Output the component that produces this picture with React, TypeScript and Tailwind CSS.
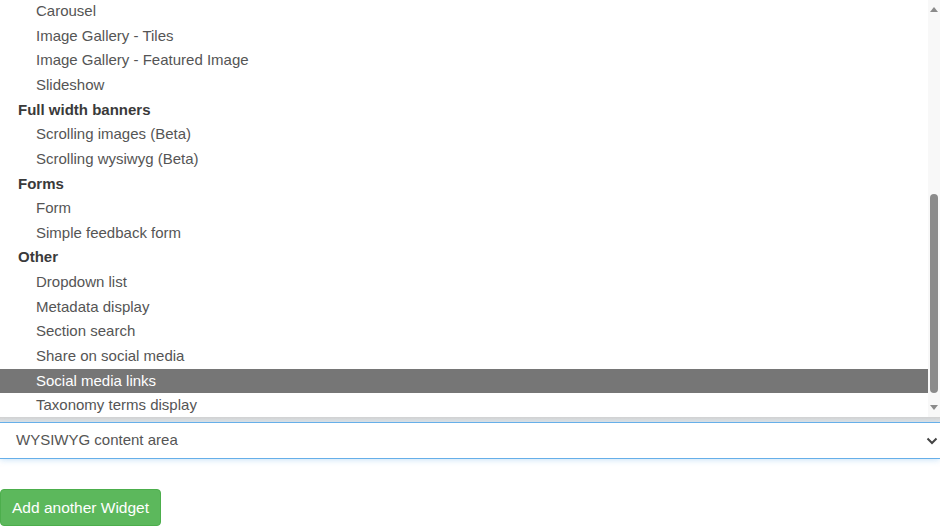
import React from 'react';

type Row = { label: string; group?: boolean; selected?: boolean };

const rows: Row[] = [
  { label: 'Carousel' },
  { label: 'Image Gallery - Tiles' },
  { label: 'Image Gallery - Featured Image' },
  { label: 'Slideshow' },
  { label: 'Full width banners', group: true },
  { label: 'Scrolling images (Beta)' },
  { label: 'Scrolling wysiwyg (Beta)' },
  { label: 'Forms', group: true },
  { label: 'Form' },
  { label: 'Simple feedback form' },
  { label: 'Other', group: true },
  { label: 'Dropdown list' },
  { label: 'Metadata display' },
  { label: 'Section search' },
  { label: 'Share on social media' },
  { label: 'Social media links', selected: true },
  { label: 'Taxonomy terms display' },
];

const OptionRow: React.FC<{ row: Row }> = ({ row }) => {
  if (row.group) {
    return <div className="h-[24.65px] flex items-center pl-[18px] font-bold text-[#3a3a3a]">{row.label}</div>;
  }
  return (
    <div
      className={`h-[24.65px] flex items-center pl-[36px] ${
        row.selected ? 'bg-[#767676] text-white' : 'text-[#555]'
      }`}
    >
      {row.label}
    </div>
  );
};

export default function App() {
  return (
    <div className="w-[940px] h-[530px] overflow-hidden bg-white text-[15px] font-['Liberation_Sans',Arial,sans-serif]">
      {/* Open dropdown list */}
      <div className="flex h-[417px]">
        <div className="flex-1 overflow-hidden">
          <div className="-mt-[1px]">
            {rows.map((r) => (
              <OptionRow key={r.label} row={r} />
            ))}
          </div>
        </div>
        {/* Scrollbar */}
        <div className="w-[12px] bg-[#f8f8f8] flex flex-col items-center">
          <div className="h-[17px] flex items-center justify-center pt-[1px]">
            <svg width="8" height="5" viewBox="0 0 8 5">
              <path d="M4 0 L8 5 L0 5 Z" fill="#8a8a8a" />
            </svg>
          </div>
          <div className="flex-1 w-full flex flex-col items-center">
            <div className="mt-[177px] w-[8px] h-[199px] rounded-full bg-[#8b8b8b]" />
          </div>
          <div className="h-[17px] flex items-center justify-center pb-[2px]">
            <svg width="8" height="5" viewBox="0 0 8 5">
              <path d="M0 0 L8 0 L4 5 Z" fill="#8a8a8a" />
            </svg>
          </div>
        </div>
      </div>
      <div className="h-[5px] bg-gradient-to-b from-[#d2d2d2] to-[#e6e6e6]" />

      {/* Select box */}
      <div className="h-[37px] flex items-center justify-between border-y border-[#66afe9] shadow-[0_1px_6px_rgba(102,175,233,0.35)] pl-[16px] pr-[2px] text-[#555]">
        <span>WYSIWYG content area</span>
        <svg width="12" height="8" viewBox="0 0 12 8" className="mt-[1px]">
          <path d="M1.5 1.5 L6 6 L10.5 1.5" fill="none" stroke="#444" strokeWidth="2" />
        </svg>
      </div>

      <div className="pt-[30px]">
        <button className="h-[37px] w-[161px] px-[11px] whitespace-nowrap text-left rounded-[4px] bg-[#5cb85c] border border-[#4cae4c] text-white text-[15.5px] font-['Liberation_Sans',Arial,sans-serif]">
          Add another Widget
        </button>
      </div>
    </div>
  );
}
